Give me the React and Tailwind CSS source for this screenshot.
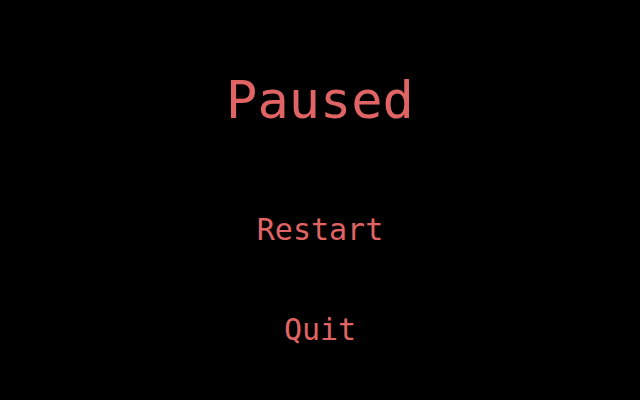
export default function App() {
  return (
    <div className="w-[640px] h-[400px] bg-black flex flex-col items-center text-[#e06464] font-['DejaVu_Sans_Mono',monospace]">
      <h1 className="mt-[70px] h-[60px] leading-[60px] text-[52px]">Paused</h1>
      <div className="mt-[82px] flex flex-col items-center gap-[64px]">
        <button className="h-[36px] leading-[36px] text-[30px] text-[#e06464]">Restart</button>
        <button className="h-[36px] leading-[36px] text-[30px] text-[#e06464]">Quit</button>
      </div>
    </div>
  );
}
